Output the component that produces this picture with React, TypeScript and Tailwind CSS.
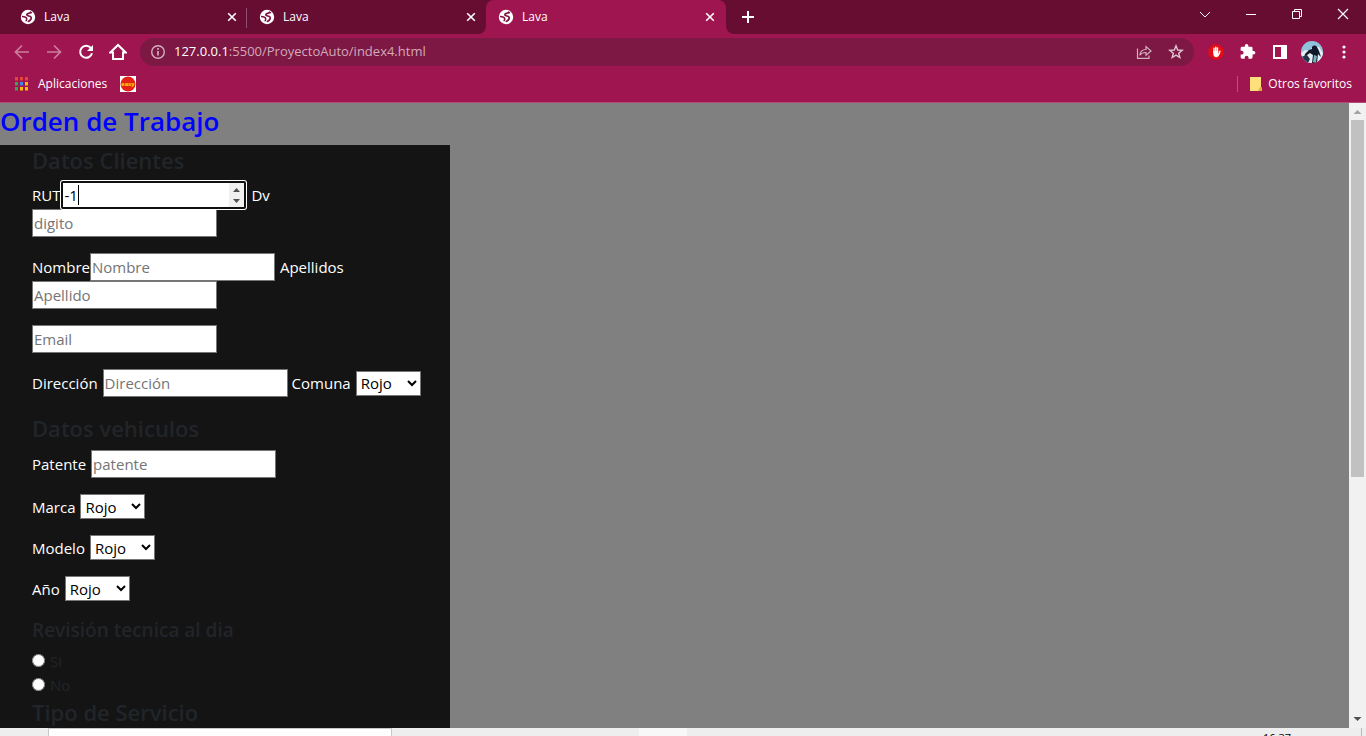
import type { ReactNode } from 'react';

function GlobeIcon() {
  return (
    <svg className="size-4 shrink-0" viewBox="0 0 16 16" aria-hidden="true">
      <circle cx="8" cy="8" r="7.2" fill="#fff" />
      <path d="M10.500 3.200C10 4.800 7 4 6.800 5.800c-.1 1.500 3.400.9 4.200 2.300.7 1.400-.7 3.200-2.600 4.300" fill="none" stroke="#7d1140" strokeWidth="1.700" strokeLinecap="round" />
      <path d="M2 7.600c2.200.1 4.300.6 4.700 2.100.2 1-.5 1.500-.6 2.500M10.300 4.200l1.700-.9" fill="none" stroke="#7d1140" strokeWidth="1.500" />
    </svg>
  );
}

function CloseIcon() {
  return (
    <svg className="size-4" viewBox="0 0 16 16" fill="none" stroke="#fff" strokeWidth="1.6" aria-hidden="true">
      <path d="M4.200 4.200l7.600 7.600M11.800 4.200l-7.600 7.600" />
    </svg>
  );
}

function Tab({ active = false, divider = false }: { active?: boolean; divider?: boolean }) {
  return (
    <div className={active ? 'relative flex w-60 items-center rounded-t-lg bg-[#9f154f] pr-2 pl-3' : 'relative flex w-[239px] items-center pr-[7px] pl-3'}>
      {active && (
        <>
          <svg className="absolute bottom-0 -left-2 size-2" viewBox="0 0 8 8" aria-hidden="true"><path d="M8 0v8H0a8 8 0 0 0 8-8z" fill="#9f154f" /></svg>
          <svg className="absolute -right-2 bottom-0 size-2" viewBox="0 0 8 8" aria-hidden="true"><path d="M0 0v8h8a8 8 0 0 1-8-8z" fill="#9f154f" /></svg>
        </>
      )}
      <GlobeIcon />
      <span className="ml-2 grow text-xs">Lava</span>
      <button type="button" aria-label="Cerrar"><CloseIcon /></button>
      {divider && <span className="absolute top-2 right-0 h-5 w-px bg-[#91506d]" />}
    </div>
  );
}

function IconButton({ label, children }: { label: string; children: ReactNode }) {
  return <button type="button" aria-label={label} className="flex size-8 shrink-0 items-center justify-center">{children}</button>;
}

function BrowserChrome() {
  const dots = ['#e8453c', '#e8453c', '#e8453c', '#34a853', '#4285f4', '#fbbc05', '#34a853', '#fbbc05', '#fbbc05'];
  return (
    <header className="shrink-0 text-white">
      <div className="flex h-[34px] bg-[#660d31] pl-2">
        <Tab divider />
        <Tab />
        <Tab active />
        <button type="button" aria-label="Nueva pestaña" className="ml-3 self-center">
          <svg className="size-5" viewBox="0 0 20 20" fill="none" stroke="#fff" strokeWidth="2"><path d="M10 4v12M4 10h12" /></svg>
        </button>
        <div className="ml-auto flex h-7 items-center">
          <button type="button" aria-label="Buscar pestañas" className="flex w-[46px] justify-center"><svg className="size-3" viewBox="0 0 12 12" fill="none" stroke="#fff"><path d="M1 4l5 5 5-5" /></svg></button>
          <button type="button" aria-label="Minimizar" className="flex w-[46px] justify-center"><svg className="size-3" viewBox="0 0 12 12" fill="none" stroke="#fff"><path d="M1 6.500h10" /></svg></button>
          <button type="button" aria-label="Restaurar" className="flex w-[46px] justify-center"><svg className="size-3" viewBox="0 0 12 12" fill="none" stroke="#fff"><path d="M1.500 3.500h7v7h-7zM3.500 3.500v-2h7v7h-2" /></svg></button>
          <button type="button" aria-label="Cerrar ventana" className="flex w-[46px] justify-center"><svg className="size-3" viewBox="0 0 12 12" fill="none" stroke="#fff" strokeWidth="1.200"><path d="M1 1l10 10M11 1L1 11" /></svg></button>
        </div>
      </div>
      <div className="border-b border-[#b04a76] bg-[#9f154f]">
        <div className="flex h-9 items-center px-1.5">
          <IconButton label="Atrás"><svg className="size-4" viewBox="0 0 16 16" fill="none" stroke="#cb7f9f" strokeWidth="1.700"><path d="M15 8H2M8 1.500L1.500 8 8 14.500" /></svg></IconButton>
          <IconButton label="Adelante"><svg className="size-4" viewBox="0 0 16 16" fill="none" stroke="#cb7f9f" strokeWidth="1.700"><path d="M1 8h13M8 1.500L14.500 8 8 14.500" /></svg></IconButton>
          <IconButton label="Recargar"><svg className="size-4" viewBox="0 0 16 16" fill="none" stroke="#fff" strokeWidth="2"><path d="M12.800 4A6 6 0 1 0 14 9.300" /><path d="M15 1v6H9z" fill="#fff" stroke="none" /></svg></IconButton>
          <IconButton label="Inicio"><svg className="size-[18px]" viewBox="0 0 18 18" fill="none" stroke="#fff" strokeWidth="2"><path d="M1.300 9.500L9 2l7.700 7.500H14V16H4V9.500z" /></svg></IconButton>
          <div className="ml-1.5 flex h-7 grow items-center rounded-full bg-[#7c1843] pr-0.5 pl-2.5">
            <svg className="size-4" viewBox="0 0 16 16" fill="none" stroke="#d3b0c0" strokeWidth="1.400" aria-hidden="true"><circle cx="8" cy="8" r="6.300" /><path d="M8 7v4.500M8 4v1.700" strokeWidth="1.700" /></svg>
            <p className="ml-2 grow text-[13px] text-[#d3a9bb]"><span className="text-white">127.0.0.1</span>:5500/ProyectoAuto/index4.html</p>
            <IconButton label="Compartir"><svg className="size-4" viewBox="0 0 16 16" fill="none" stroke="#d3b0c0" strokeWidth="1.200"><path d="M1.500 4.500v9.900h11.500v-3" /><path d="M3.800 11.200c.5-4 2.600-5.700 6.200-5.700V2.500l5 4.500-5 4.300V8.500c-3-.1-4.700.6-6.200 2.700z" /></svg></IconButton>
            <IconButton label="Favorito"><svg className="size-4" viewBox="0 0 16 16" fill="none" stroke="#dfc5d1" strokeWidth="1.400"><path d="M8 1.800l1.700 4.200 4.500.3-3.500 2.900 1.100 4.400L8 11.200l-3.800 2.400 1.100-4.400-3.500-2.900 4.500-.3z" /></svg></IconButton>
          </div>
          <div className="ml-1.5 flex">
            <IconButton label="Bloqueador"><svg className="size-4" viewBox="0 0 16 16"><path d="M5 .5h6L15.500 5v6L11 15.500H5L.5 11V5z" fill="#e40d13" /><path d="M6 8V4.300M7.800 8V3.200M9.500 8V4M11.300 9.500l.6-2.400" stroke="#fff" strokeWidth="1.400" strokeLinecap="round" /><path d="M5.300 7h5v2.500l1.500-.6c-.6 2.500-1.500 4.300-3.500 4.300-2.200 0-3-1.700-3-3.700z" fill="#fff" /></svg></IconButton>
            <IconButton label="Extensiones"><svg className="size-5" viewBox="0 0 24 24" fill="#fff"><path d="M20.500 11H19V7a2 2 0 0 0-2-2h-4V3.500a2.500 2.500 0 0 0-5 0V5H4a2 2 0 0 0-2 2v3.800h1.500a2.700 2.700 0 0 1 0 5.400H2V20a2 2 0 0 0 2 2h3.800v-1.500a2.700 2.700 0 0 1 5.400 0V22H17a2 2 0 0 0 2-2v-4h1.500a2.500 2.500 0 0 0 0-5z" transform="translate(1.500 1.500) scale(.84)" /></svg></IconButton>
            <IconButton label="Panel lateral"><svg className="size-4" viewBox="0 0 16 16"><path fillRule="evenodd" fill="#fff" d="M1 1h14v14H1zM3 3v10h6V3z" /></svg></IconButton>
            <IconButton label="Perfil">
              <svg className="size-[22px]" viewBox="0 0 22 22"><defs><clipPath id="avatar"><circle cx="11" cy="11" r="11" /></clipPath></defs><g clipPath="url(#avatar)"><path d="M0 0h22v22H0z" fill="#8fc3dc" /><path d="M0 12l4-3 5 1 3-5 6 1 4 6v10H0z" fill="#e4eef2" /><path d="M11 6c1-2 4-2 5 0l2 4 2 6-3-3-1 9h-5l1-8-3-2-3 2-3 3 1-4 4-4 3-1z" fill="#101829" /><path d="M0 16l6-2 3 4-2 4H0z" fill="#22334c" /><path d="M13 14l3 1-1 6h-3z" fill="#7aaec1" /></g></svg>
            </IconButton>
            <IconButton label="Menú"><svg className="size-4" viewBox="0 0 16 16" fill="#fff"><circle cx="8" cy="3" r="1.600" /><circle cx="8" cy="8" r="1.600" /><circle cx="8" cy="13" r="1.600" /></svg></IconButton>
          </div>
        </div>
        <nav className="flex h-8 items-center pr-3.5 pb-1 pl-[15px] text-xs">
          <a href="#aplicaciones" className="flex items-center gap-[9px]">
            <svg className="size-3.5" viewBox="0 0 14 14" aria-hidden="true">{dots.map((color, i) => <rect key={i} x={(i % 3) * 5} y={Math.floor(i / 3) * 5} width="3" height="3.500" fill={color} />)}</svg>
            Aplicaciones
          </a>
          <a href="#easy" className="ml-[13px]" aria-label="Easy">
            <svg className="size-4" viewBox="0 0 16 16"><path d="M0 0h16v16H0z" fill="#fff" /><circle cx="8" cy="8" r="7.500" fill="#e52116" /><text x="8" y="10" textAnchor="middle" fontSize="6" fontWeight="bold" fontFamily="Liberation Sans, sans-serif" fill="#ffe100">easy</text></svg>
          </a>
          <span className="ml-auto h-4 w-px bg-[#bd4f7b]" />
          <a href="#otros" className="ml-[11px] flex items-center gap-[5px]">
            <svg className="size-3.5" viewBox="0 0 14 14" aria-hidden="true"><path d="M1 0h11v10l1 1v3H1z" fill="#ffdf79" /><path d="M9 14l2-4 2 1v3z" fill="#e7ac3a" /></svg>
            Otros favoritos
          </a>
        </nav>
      </div>
    </header>
  );
}

const inputClass = 'h-7 w-[185px] border border-[#767676] bg-white px-px text-[15px] text-black placeholder:text-[#757575]';

function TextField({ id, label, placeholder, tight = false }: { id: string; label?: string; placeholder: string; tight?: boolean }) {
  return (
    <>
      {label && <label htmlFor={id} className={tight ? 'text-white' : 'mr-[5px] text-white'}>{label}</label>}
      <input id={id} type="text" aria-label={label ? undefined : placeholder} placeholder={placeholder} className={inputClass} />
    </>
  );
}

function SelectField({ id, label }: { id: string; label: string }) {
  return (
    <>
      <label htmlFor={id} className="mr-[5px] text-white">{label}</label>
      <select id={id} className="h-[25px] w-[65px] border border-[#767676] bg-white text-[15px] text-black">
        <option>Rojo</option>
      </select>
    </>
  );
}

function Row({ children }: { children: ReactNode }) {
  return <div className="mb-4 flex flex-wrap items-center">{children}</div>;
}

function SectionTitle({ children }: { children: ReactNode }) {
  return <h2 className="mb-1.5 text-[22px] leading-[31px] font-semibold">{children}</h2>;
}

function WorkOrder() {
  return (
    <main className="min-w-0 grow overflow-hidden bg-[#808080]">
      <h1 className="mb-1.5 text-[26px] leading-9 font-semibold text-[#0000ff]">Orden de Trabajo</h1>
      <form className="w-1/3 bg-[#141414] pr-4 pb-8 pl-8 text-[15px] leading-6 text-[#212529]">
        <div className="-mb-px"><SectionTitle>Datos Clientes</SectionTitle></div>
        <Row>
          <label htmlFor="rut" className="mr-px text-white">RUT</label>
          <div className="relative mr-[5px]">
            <input
              id="rut"
              type="number"
              defaultValue="-1"
              className="block h-7 w-[185px] rounded-xs border-2 border-[#101010] bg-white px-px text-[15px] text-black caret-transparent ring-1 ring-white outline-none [&::-webkit-inner-spin-button]:appearance-none"
            />
            <span className="absolute top-1 left-[17px] h-5 w-px bg-black" />
            <svg className="pointer-events-none absolute top-0.5 right-0.5 h-6 w-[15px]" viewBox="0 0 15 24" aria-hidden="true">
              <path d="M0 0h15v24H0z" fill="#f0f0f0" />
              <path d="M4 9l3.500-4L11 9zM4 16l3.500 4 3.500-4z" fill="#505050" />
            </svg>
          </div>
          <label htmlFor="dv" className="mr-1 text-white">Dv</label>
          <input id="dv" type="text" placeholder="digito" className={inputClass} />
        </Row>
        <Row>
          <TextField id="nombre" label="Nombre" placeholder="Nombre" tight />
          <label htmlFor="apellido" className="mx-[5px] text-white">Apellidos</label>
          <input id="apellido" type="text" placeholder="Apellido" className={inputClass} />
        </Row>
        <Row><TextField id="email" placeholder="Email" /></Row>
        <Row>
          <TextField id="direccion" label="Dirección" placeholder="Dirección" />
          <span className="w-1" />
          <SelectField id="comuna" label="Comuna" />
        </Row>
        <SectionTitle>Datos vehiculos</SectionTitle>
        <Row><TextField id="patente" label="Patente" placeholder="patente" /></Row>
        <Row><SelectField id="marca" label="Marca" /></Row>
        <Row><SelectField id="modelo" label="Modelo" /></Row>
        <Row><SelectField id="anio" label="Año" /></Row>
        <fieldset>
          <legend className="mb-1.5 text-[19px] leading-[26px] font-semibold">Revisión tecnica al dia</legend>
          <label className="flex items-center gap-[5px]"><input type="radio" name="revision" className="mb-0.5 size-[13px]" />Si</label>
          <label className="flex items-center gap-[5px]"><input type="radio" name="revision" className="mb-0.5 size-[13px]" />No</label>
        </fieldset>
        <SectionTitle>Tipo de Servicio</SectionTitle>
      </form>
    </main>
  );
}

function Scrollbar() {
  return (
    <div className="flex w-[17px] shrink-0 flex-col items-center bg-[#f1f1f1]" aria-hidden="true">
      <svg className="h-[17px] w-[17px] shrink-0" viewBox="0 0 17 17"><path d="M4.500 11L8.500 7l4 4z" fill="#a3a3a3" /></svg>
      <div className="flex w-full grow flex-col px-0.5"><div className="h-[60.4%] bg-[#c1c1c1]" /></div>
      <svg className="h-[17px] w-[17px] shrink-0" viewBox="0 0 17 17"><path d="M4.500 6l4 4 4-4z" fill="#505050" /></svg>
    </div>
  );
}

function Taskbar() {
  return (
    <footer className="flex h-2 shrink-0 overflow-hidden bg-[#eeeeee]">
      <div className="ml-12 w-[344px] border-x border-t border-[#c8c8c8] bg-white" />
      <div className="ml-[247px] w-12 bg-[#f8f8f8]" />
      <time className="mt-1 mr-[70px] ml-auto text-[11px] leading-3 text-black">16:37</time>
      <div className="mr-1 w-px bg-[#b8b8b8]" />
    </footer>
  );
}

export default function App() {
  return (
    <div className="flex h-screen flex-col overflow-hidden font-['Open_Sans','Noto_Sans',sans-serif]">
      <BrowserChrome />
      <div className="flex min-h-0 grow">
        <WorkOrder />
        <Scrollbar />
      </div>
      <Taskbar />
    </div>
  );
}
